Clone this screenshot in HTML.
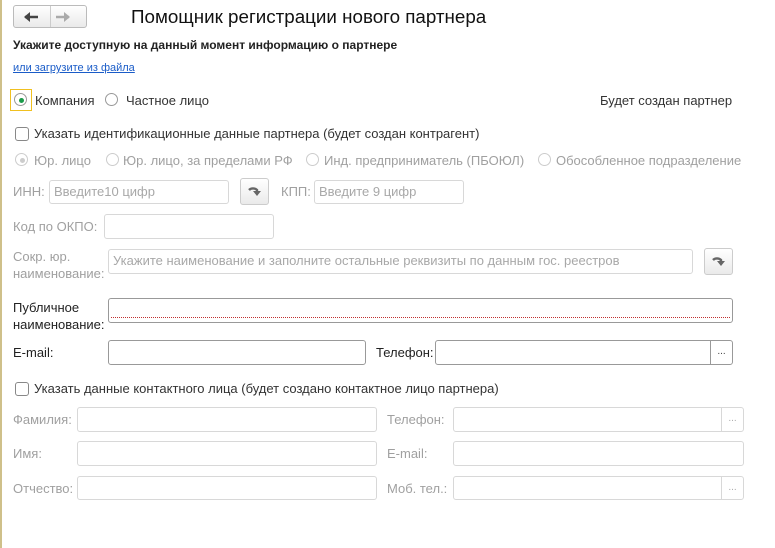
<!DOCTYPE html>
<html><head><meta charset="utf-8"><style>
body{margin:0;width:775px;height:548px;background:#fff;position:relative;overflow:hidden;font-family:"Liberation Sans",Arial,sans-serif;font-size:13px;color:#333}
.a{position:absolute;white-space:nowrap}
.g{color:#a0a0a0}
.in{position:absolute;border:1px solid #bbb;border-radius:3px;box-sizing:border-box;background:#fff;font-size:13px;color:#a8a8a8;padding-left:4px;line-height:22px;white-space:nowrap;overflow:hidden}
.in.d{border-color:#d8d8d8}
.btn{position:absolute;border:1px solid #ccc;border-radius:3px;box-sizing:border-box;background:linear-gradient(#fff,#eaeaea);}
.dots{position:absolute;right:0;top:0;bottom:0;width:21px;border-left:1px solid #bbb;text-align:center;font-size:10px;color:#444;line-height:22px}
.rb{position:absolute;width:13px;height:13px;border:1px solid #999;border-radius:50%;box-sizing:border-box;background:#fff}
.rb.d{border-color:#ccc}
.cb{position:absolute;width:14px;height:14px;border:1px solid #888;border-radius:3px;box-sizing:border-box;background:#fff}
</style></head><body>
<div class="a" style="left:0;top:0;width:2px;height:548px;background:#cfc08a"></div>
<div class="btn" style="left:13px;top:5px;width:74px;height:23px;border-color:#bbb"></div>
<div class="a" style="left:50px;top:6px;width:1px;height:21px;background:#ccc"></div>
<svg class="a" style="left:22px;top:10px" width="60" height="14"><path d="M3 7h13" stroke="#444" stroke-width="2.5" fill="none"/><path d="M2 7l6-5v10z" fill="#444"/><path d="M47 7h-13" stroke="#aaa" stroke-width="2.5" fill="none"/><path d="M48 7l-6-5v10z" fill="#aaa"/></svg>
<div class="a" style="left:131px;top:6px;font-size:18.8px;color:#111">Помощник регистрации нового партнера</div>
<div class="a" style="left:13px;top:38px;font-size:12px;font-weight:bold;color:#222">Укажите доступную на данный момент информацию о партнере</div>
<div class="a" style="left:13px;top:62px;font-size:11px;color:#1a5cc8;text-decoration:underline">или загрузите из файла</div>
<div class="a" style="left:10px;top:89px;width:22px;height:22px;border:1px solid #f0c020;box-sizing:border-box"></div>
<div class="rb" style="left:14px;top:93px"></div><div class="a" style="left:18.5px;top:97.5px;width:5px;height:5px;border-radius:50%;background:#1a9a4a"></div>
<div class="a" style="left:35px;top:93px">Компания</div>
<div class="rb" style="left:105px;top:93px"></div>
<div class="a" style="left:126px;top:93px">Частное лицо</div>
<div class="a" style="left:600px;top:93px">Будет создан партнер</div>
<div class="cb" style="left:15px;top:127px"></div>
<div class="a" style="left:34px;top:126px">Указать идентификационные данные партнера (будет создан контрагент)</div>
<div class="rb d" style="left:15px;top:153px"></div><div class="a" style="left:19.5px;top:157.5px;width:5px;height:5px;border-radius:50%;background:#ccc"></div>
<div class="a g" style="left:34px;top:153px">Юр. лицо</div>
<div class="rb d" style="left:106px;top:153px"></div>
<div class="a g" style="left:123px;top:153px">Юр. лицо, за пределами РФ</div>
<div class="rb d" style="left:306px;top:153px"></div>
<div class="a g" style="left:324px;top:153px">Инд. предприниматель (ПБОЮЛ)</div>
<div class="rb d" style="left:538px;top:153px"></div>
<div class="a g" style="left:556px;top:153px">Обособленное подразделение</div>
<div class="a g" style="left:13px;top:184px">ИНН:</div>
<div class="in d" style="left:49px;top:180px;width:180px;height:24px">Введите10 цифр</div>
<div class="btn" style="left:240px;top:178px;width:29px;height:27px"></div>
<svg class="a" style="left:247px;top:184px" width="14" height="14"><path d="M2 6a5 4 0 0 1 8 0v2" stroke="#666" stroke-width="2.4" fill="none"/><path d="M6 7h8l-4 5z" fill="#666"/></svg>
<div class="a g" style="left:281px;top:184px">КПП:</div>
<div class="in d" style="left:314px;top:180px;width:150px;height:24px">Введите 9 цифр</div>
<div class="a g" style="left:13px;top:219px">Код по ОКПО:</div>
<div class="in d" style="left:104px;top:214px;width:170px;height:25px"></div>
<div class="a g" style="left:13px;top:248px;line-height:17px">Сокр. юр.<br>наименование:</div>
<div class="in d" style="left:108px;top:249px;width:585px;height:25px">Укажите наименование и заполните остальные реквизиты по данным гос. реестров</div>
<div class="btn" style="left:704px;top:248px;width:29px;height:27px"></div>
<svg class="a" style="left:711px;top:254px" width="14" height="14"><path d="M2 6a5 4 0 0 1 8 0v2" stroke="#666" stroke-width="2.4" fill="none"/><path d="M6 7h8l-4 5z" fill="#666"/></svg>
<div class="a" style="left:13px;top:299px;line-height:17px;color:#222">Публичное<br>наименование:</div>
<div class="in" style="left:108px;top:298px;width:625px;height:25px;border-color:#999"></div>
<div class="a" style="left:111px;top:317px;width:619px;border-top:1px dotted #c03030"></div>
<div class="a" style="left:13px;top:345px;color:#222">E-mail:</div>
<div class="in" style="left:108px;top:340px;width:258px;height:25px;border-color:#999"></div>
<div class="a" style="left:376px;top:345px;color:#222">Телефон:</div>
<div class="in" style="left:435px;top:340px;width:298px;height:25px;border-color:#999"><div class="dots" style="border-color:#999">...</div></div>
<div class="cb" style="left:15px;top:382px"></div>
<div class="a" style="left:34px;top:381px">Указать данные контактного лица (будет создано контактное лицо партнера)</div>
<div class="a g" style="left:13px;top:412px">Фамилия:</div>
<div class="in d" style="left:77px;top:407px;width:300px;height:25px"></div>
<div class="a g" style="left:387px;top:412px">Телефон:</div>
<div class="in d" style="left:453px;top:407px;width:291px;height:25px"><div class="dots" style="border-color:#d8d8d8;color:#aaa">...</div></div>
<div class="a g" style="left:13px;top:446px">Имя:</div>
<div class="in d" style="left:77px;top:441px;width:300px;height:25px"></div>
<div class="a g" style="left:387px;top:446px">E-mail:</div>
<div class="in d" style="left:453px;top:441px;width:291px;height:25px"></div>
<div class="a g" style="left:13px;top:481px">Отчество:</div>
<div class="in d" style="left:77px;top:476px;width:300px;height:24px"></div>
<div class="a g" style="left:387px;top:481px">Моб. тел.:</div>
<div class="in d" style="left:453px;top:476px;width:291px;height:24px"><div class="dots" style="border-color:#d8d8d8;color:#aaa">...</div></div>
</body></html>
